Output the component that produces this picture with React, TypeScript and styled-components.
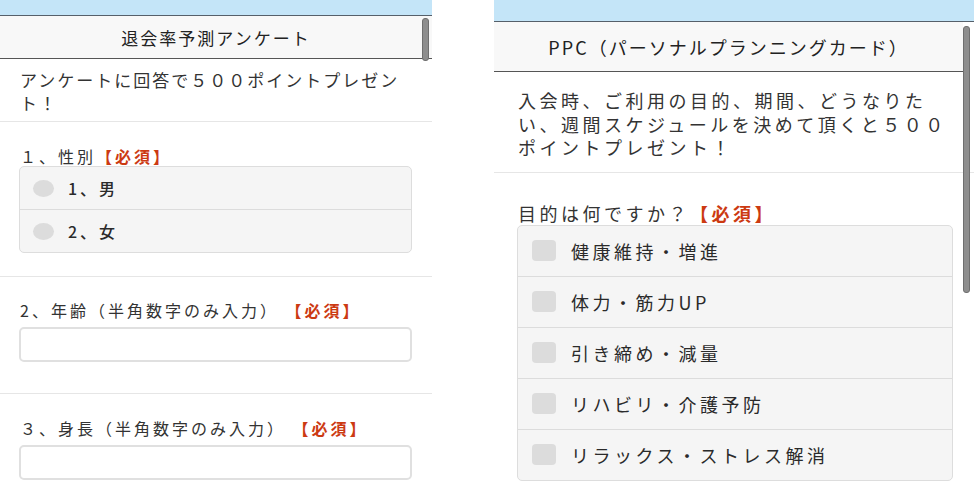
import React from "react";
import styled, { createGlobalStyle } from "styled-components";

const Global = createGlobalStyle`
  html, body { margin: 0; padding: 0; background: #ffffff; }
  body {
    font-family: "Noto Sans CJK JP", "Noto Sans", sans-serif;
    color: #333333;
    overflow: hidden;
  }
`;

const Page = styled.div`
  display: flex;
  gap: 62px;
  width: 974px;
  height: 495px;
  overflow: hidden;
`;

const Panel = styled.div<{ $w: number }>`
  position: relative;
  width: ${(p) => p.$w}px;
  flex: none;
  display: flex;
  flex-direction: column;
  background: #ffffff;
`;

const TopBar = styled.div<{ $h: number }>`
  height: ${(p) => p.$h}px;
  background: #c4e5f8;
  border-bottom: 1px solid #56606a;
`;

const Header = styled.div<{ $h: number; $fs: number; $ls: number; $right: number }>`
  height: ${(p) => p.$h}px;
  margin-right: ${(p) => p.$right}px;
  background: #f8f8f8;
  border-bottom: 1px solid #555555;
  display: flex;
  align-items: center;
  justify-content: center;
  font-size: ${(p) => p.$fs}px;
  letter-spacing: ${(p) => p.$ls}px;
  font-weight: 400;
  color: #222222;
`;

const Scrollbar = styled.div<{ $top: number; $h: number; $x: number }>`
  position: absolute;
  top: ${(p) => p.$top}px;
  left: ${(p) => p.$x}px;
  width: 5px;
  height: ${(p) => p.$h}px;
  border-radius: 3px;
  background: #8e8e8e;
  border: 1px solid #6f6f6f;
`;

const Section = styled.div<{ $pt: number; $pb: number; $px: number; $pr: number; $line?: boolean }>`
  padding: ${(p) => p.$pt}px ${(p) => p.$pr}px ${(p) => p.$pb}px ${(p) => p.$px}px;
  border-bottom: ${(p) => (p.$line ? "1px solid #e6e6e6" : "none")};
  display: flex;
  flex-direction: column;
`;

const Intro = styled.div<{ $fs: number; $ls: number; $lh: number }>`
  font-size: ${(p) => p.$fs}px;
  letter-spacing: ${(p) => p.$ls}px;
  line-height: ${(p) => p.$lh}px;
  color: #333333;
  line-break: strict;
`;

const Label = styled.div<{ $fs: number; $ls: number; $lh: number; $mb: number; $ml?: number }>`
  font-size: ${(p) => p.$fs}px;
  letter-spacing: ${(p) => p.$ls}px;
  line-height: ${(p) => p.$lh}px;
  margin-bottom: ${(p) => p.$mb}px;
  margin-left: ${(p) => p.$ml ?? 0}px;
  color: #333333;
  white-space: pre;
`;

const Required = styled.span`
  color: #cc3a12;
  font-weight: 700;
`;

const Group = styled.div`
  border: 1px solid #dddddd;
  border-radius: 5px;
  background: #f5f5f5;
  overflow: hidden;
  display: flex;
  flex-direction: column;
`;

const Option = styled.div<{ $h: number; $fs: number; $ls: number; $gap: number; $weight: number }>`
  height: ${(p) => p.$h}px;
  display: flex;
  align-items: center;
  gap: ${(p) => p.$gap}px;
  padding-left: 13px;
  font-size: ${(p) => p.$fs}px;
  letter-spacing: ${(p) => p.$ls}px;
  font-weight: ${(p) => p.$weight};
  color: #2a2a2a;
  & + & {
    border-top: 1px solid #dcdcdc;
  }
`;

const Radio = styled.span`
  width: 21px;
  height: 17px;
  border-radius: 50%;
  background: #dcdcdc;
  flex: none;
`;

const Check = styled.span`
  width: 24px;
  height: 21px;
  border-radius: 4px;
  background: #dcdcdc;
  flex: none;
  margin-left: 1px;
`;

const TextInput = styled.div`
  height: 31px;
  border: 2px solid #e0e0e0;
  border-radius: 5px;
  background: #ffffff;
`;

const leftOptions = ["1、男", "2、女"];
const rightOptions = [
  "健康維持・増進",
  "体力・筋力UP",
  "引き締め・減量",
  "リハビリ・介護予防",
  "リラックス・ストレス解消",
];

export default function App() {
  return (
    <>
      <Global />
      <Page>
        <Panel $w={432}>
          <TopBar $h={15} />
          <Header $h={42} $fs={17} $ls={2} $right={0}>
            退会率予測アンケート
          </Header>
          <Scrollbar $top={18} $h={41} $x={422} />
          <Section $pt={9} $pb={7} $px={20} $pr={20} $line>
            <Intro $fs={17} $ls={2} $lh={23}>
              アンケートに回答で５００ポイントプレゼント！
            </Intro>
          </Section>
          <Section $pt={24} $pb={23} $px={19} $pr={20} $line>
            <Label $fs={16} $ls={3} $lh={20} $mb={0} $ml={1}>
              １、性別<Required>【必須】</Required>
            </Label>
            <Group>
              {leftOptions.map((o) => (
                <Option key={o} $h={42} $fs={16} $ls={3} $gap={14} $weight={500}>
                  <Radio />
                  {o}
                </Option>
              ))}
            </Group>
          </Section>
          <Section $pt={23} $pb={31} $px={19} $pr={20} $line>
            <Label $fs={16} $ls={3} $lh={20} $mb={7} $ml={1}>
              2、年齢（半角数字のみ入力） <Required>【必須】</Required>
            </Label>
            <TextInput />
          </Section>
          <Section $pt={24} $pb={10} $px={19} $pr={20}>
            <Label $fs={16} $ls={3} $lh={20} $mb={7} $ml={1}>
              ３、身長（半角数字のみ入力） <Required>【必須】</Required>
            </Label>
            <TextInput />
          </Section>
        </Panel>

        <Panel $w={480}>
          <TopBar $h={21} />
          <Header $h={49} $fs={18} $ls={2} $right={11}>
            PPC（パーソナルプランニングカード）
          </Header>
          <Scrollbar $top={26} $h={265} $x={469} />
          <Section $pt={17} $pb={12} $px={24} $pr={22} $line>
            <Intro $fs={18} $ls={3.5} $lh={23.5}>
              入会時、ご利用の目的、期間、どうなりたい、週間スケジュールを決めて頂くと５００ポイントプレゼント！
            </Intro>
          </Section>
          <Section $pt={28} $pb={10} $px={23} $pr={21}>
            <Label $fs={18} $ls={3.5} $lh={24} $mb={0} $ml={1}>
              目的は何ですか？<Required>【必須】</Required>
            </Label>
            <Group>
              {rightOptions.map((o) => (
                <Option key={o} $h={50} $fs={18} $ls={3.5} $gap={15} $weight={400}>
                  <Check />
                  {o}
                </Option>
              ))}
            </Group>
          </Section>
        </Panel>
      </Page>
    </>
  );
}
